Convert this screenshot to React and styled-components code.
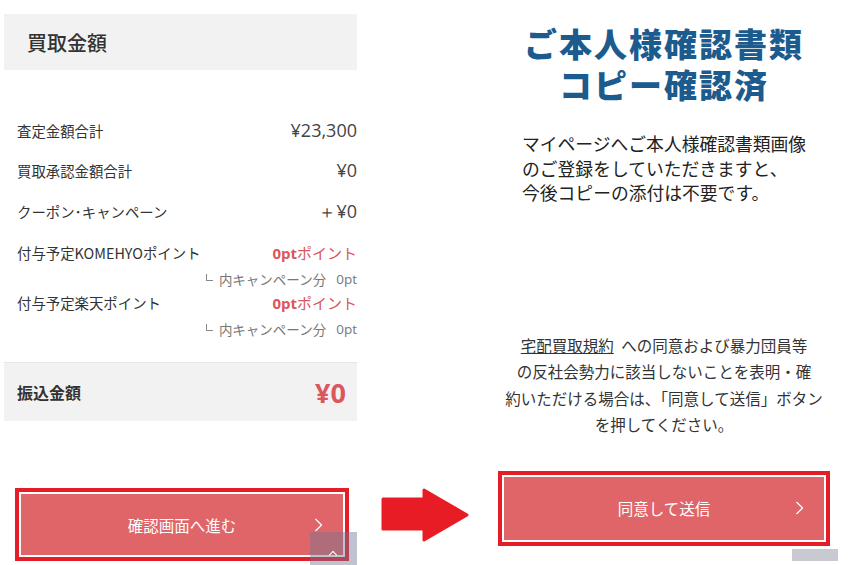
import styled, { createGlobalStyle } from "styled-components";

const GlobalStyle = createGlobalStyle`
  html, body {
    margin: 0;
    padding: 0;
    background: #fff;
  }
  body {
    font-family: "Noto Sans CJK JP", "Noto Sans", sans-serif;
    color: #333;
  }
`;

const Page = styled.div`
  display: flex;
  width: 850px;
  height: 565px;
  overflow: hidden;
`;

/* ---- left screen ---- */

const LeftScreen = styled.div`
  position: relative;
  width: 353px;
  margin-left: 4px;
  padding-top: 14px;
  display: flex;
  flex-direction: column;
`;

const SectionHeader = styled.div`
  height: 56px;
  background: #f2f2f2;
  display: flex;
  align-items: center;
  padding-left: 23px;
  font-size: 20px;
  font-weight: 500;
  color: #333;
`;

const Summary = styled.div`
  padding: 50px 0 0 13px;
`;

const Row = styled.div`
  display: flex;
  justify-content: space-between;
  align-items: center;
  height: 20px;
  margin-bottom: ${({ gap }) => gap}px;
  font-size: 14.4px;
  color: #333;
`;

const Amount = styled.span`
  font-family: "Open Sans", "Noto Sans", sans-serif;
  font-size: 18px;
  color: #444;
`;

const Points = styled.span`
  color: #d9575d;
  font-size: 15px;
  b {
    font-family: "Open Sans", sans-serif;
    font-weight: 700;
  }
`;

const SubRow = styled.div`
  display: flex;
  justify-content: flex-end;
  align-items: center;
  height: 20px;
  margin-bottom: ${({ gap }) => gap}px;
  font-size: 13.5px;
  color: #777;
`;

const Corner = styled.span`
  display: inline-block;
  width: 6px;
  height: 6px;
  margin: 0 6px 4px 0;
  border-left: 1px solid #888;
  border-bottom: 1px solid #888;
`;

const SubPoints = styled.span`
  margin-left: 10px;
  font-family: "Open Sans", sans-serif;
`;

const TotalBox = styled.div`
  height: 58px;
  background: #f2f2f2;
  border-top: 1px solid #e6e6e6;
  display: flex;
  justify-content: space-between;
  align-items: center;
  padding: 0 11px 0 13px;
`;

const TotalLabel = styled.span`
  font-size: 16px;
  font-weight: 700;
  color: #333;
`;

const TotalValue = styled.span`
  font-family: "Open Sans", sans-serif;
  font-size: 27px;
  font-weight: 700;
  color: #d9575d;
`;

const Highlight = styled.div`
  border: 4px solid #e41d26;
  background: #fff;
  padding: 2px;
  margin: ${({ m }) => m};
`;

const ActionButton = styled.div`
  position: relative;
  height: ${({ h }) => h}px;
  background: #e06568;
  display: flex;
  align-items: center;
  justify-content: center;
  color: #fff;
  font-size: 15.5px;
  svg {
    position: absolute;
    right: 20px;
    top: 50%;
    transform: translateY(-50%);
  }
`;

const FloatingTop = styled.div`
  position: absolute;
  left: 306px;
  top: 532px;
  width: 47px;
  height: 40px;
  background: rgba(115, 120, 148, 0.45);
  &::after {
    content: "";
    position: absolute;
    left: 20px;
    top: 20px;
    width: 5px;
    height: 5px;
    border-left: 1px solid #fff;
    border-top: 1px solid #fff;
    transform: rotate(45deg);
  }
`;

/* ---- arrow ---- */

const ArrowSlot = styled.div`
  width: 141px;
  display: flex;
  align-items: flex-end;
  justify-content: center;
  padding: 0 6px 23px 0;
  box-sizing: border-box;
`;

/* ---- right screen ---- */

const RightScreen = styled.div`
  width: 340px;
  display: flex;
  flex-direction: column;
`;

const Title = styled.h1`
  width: 332px;
  margin: 23px 0 0;
  text-align: center;
  font-size: 33px;
  line-height: 41px;
  font-weight: 900;
  color: #1c5b8e;
  letter-spacing: 2px;
`;

const Lead = styled.p`
  margin: 26px 0 0;
  padding-left: 24px;
  font-size: 17.8px;
  line-height: 24.5px;
  color: #222;
`;

const Terms = styled.p`
  width: 332px;
  margin: 127px 0 0;
  text-align: center;
  font-size: 15.5px;
  line-height: 26.5px;
  color: #333;
  a {
    color: #333;
    text-decoration: underline;
    margin-right: 4px;
  }
`;

const ScrollBar = styled.div`
  align-self: flex-end;
  width: 46px;
  height: 12px;
  margin-top: 3px;
  background: #c9cad1;
`;

const Chevron = () => (
  <svg width="9" height="15" viewBox="0 0 9 15">
    <polyline points="1.5,1.5 7.5,7.5 1.5,13.5" fill="none" stroke="#fff" strokeWidth="1.3" />
  </svg>
);

const BigArrow = () => (
  <svg width="88" height="54" viewBox="0 0 88 54">
    <path
      d="M2 11 H43 V2 L86 27 L43 52 V41 H2 Z"
      fill="#e81c24"
      stroke="#e81c24"
      strokeWidth="3"
      strokeLinejoin="round"
    />
  </svg>
);

export default function App() {
  return (
    <>
      <GlobalStyle />
      <Page>
        <LeftScreen>
          <SectionHeader>買取金額</SectionHeader>
          <Summary>
            <Row gap={20}>
              <span>査定金額合計</span>
              <Amount>¥23,300</Amount>
            </Row>
            <Row gap={21}>
              <span>買取承認金額合計</span>
              <Amount>¥0</Amount>
            </Row>
            <Row gap={21}>
              <span>クーポン･キャンペーン</span>
              <Amount>＋¥0</Amount>
            </Row>
            <Row gap={7}>
              <span>付与予定KOMEHYOポイント</span>
              <Points>
                <b>0pt</b>ポイント
              </Points>
            </Row>
            <SubRow gap={3}>
              <Corner />
              <span>内キャンペーン分</span>
              <SubPoints>0pt</SubPoints>
            </SubRow>
            <Row gap={7}>
              <span>付与予定楽天ポイント</span>
              <Points>
                <b>0pt</b>ポイント
              </Points>
            </Row>
            <SubRow gap={23}>
              <Corner />
              <span>内キャンペーン分</span>
              <SubPoints>0pt</SubPoints>
            </SubRow>
          </Summary>
          <TotalBox>
            <TotalLabel>振込金額</TotalLabel>
            <TotalValue>¥0</TotalValue>
          </TotalBox>
          <Highlight m="67px 8px 0 11px">
            <ActionButton h={61}>
              確認画面へ進む
              <Chevron />
            </ActionButton>
          </Highlight>
          <FloatingTop />
        </LeftScreen>

        <ArrowSlot>
          <BigArrow />
        </ArrowSlot>

        <RightScreen>
          <Title>
            ご本人様確認書類
            <br />
            コピー確認済
          </Title>
          <Lead>
            マイページへご本人様確認書類画像
            <br />
            のご登録をしていただきますと、
            <br />
            今後コピーの添付は不要です。
          </Lead>
          <Terms>
            <a>宅配買取規約</a> への同意および暴力団員等
            <br />
            の反社会勢力に該当しないことを表明・確
            <br />
            約いただける場合は、「同意して送信」ボタン
            <br />
            を押してください。
          </Terms>
          <Highlight m="33px 8px 0 0">
            <ActionButton h={63}>
              同意して送信
              <Chevron />
            </ActionButton>
          </Highlight>
          <ScrollBar />
        </RightScreen>
      </Page>
    </>
  );
}
